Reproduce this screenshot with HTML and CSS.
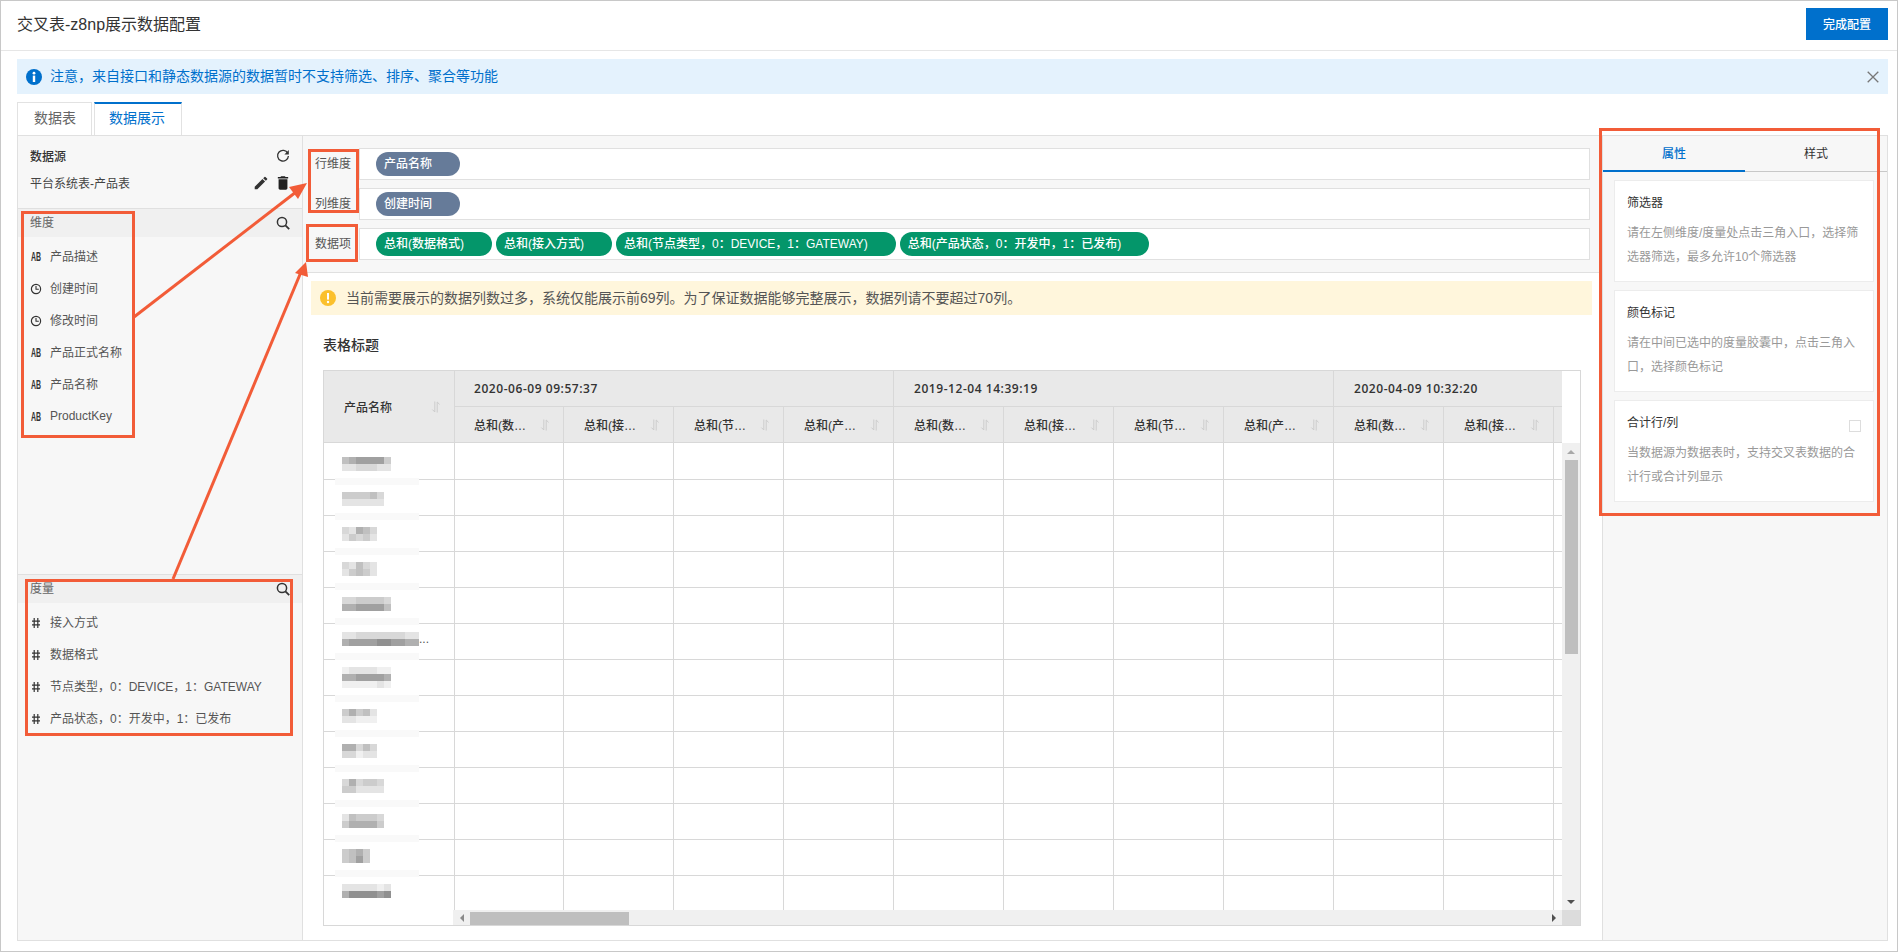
FILE: index.html
```html
<!DOCTYPE html>
<html lang="zh-CN">
<head>
<meta charset="utf-8">
<title>交叉表-z8np展示数据配置</title>
<link rel="stylesheet" href="styles.css">
</head>
<body>
<svg class="defs" aria-hidden="true">
  <symbol id="i-sort" viewBox="0 0 10 14"><path d="M3.8 1.5v10.5L1.4 9.6M6.2 12.5V2l2.4 2.4" fill="none" stroke="currentColor" stroke-width="1"/></symbol>
  <symbol id="i-ab-clock" viewBox="0 0 12 12"><circle cx="6" cy="6" r="4.6" fill="none" stroke="currentColor" stroke-width="1.2"/><path d="M6 3v3.2h2.8" fill="none" stroke="currentColor" stroke-width="1.1"/></symbol>
  <symbol id="i-hash" viewBox="0 0 12 12"><path d="M4.2 1v10M7.8 1v10M2 4.2h8M2 7.8h8" fill="none" stroke="currentColor" stroke-width="1.2"/></symbol>
  <symbol id="i-search" viewBox="0 0 14 14"><circle cx="6" cy="6" r="4.6" fill="none" stroke="currentColor" stroke-width="1.5"/><path d="M9.4 9.4l3.8 3.8" fill="none" stroke="currentColor" stroke-width="1.8"/></symbol>
</svg>
<div class="frame">
  <header class="topbar">
    <h1 class="page-title">交叉表-z8np展示数据配置</h1>
    <button class="done-btn">完成配置</button>
  </header>

  <div class="notice">
    <svg class="notice-icon" viewBox="0 0 16 16"><circle cx="8" cy="8" r="8" fill="#0070cc"/><rect x="6.8" y="6.6" width="2.4" height="6.4" fill="#fff"/><circle cx="8" cy="4.2" r="1.4" fill="#fff"/></svg>
    <span class="notice-text">注意，来自接口和静态数据源的数据暂时不支持筛选、排序、聚合等功能</span>
    <svg class="notice-close" viewBox="0 0 12 12"><path d="M.7.7l10.6 10.6M11.3.7L.7 11.3" fill="none" stroke="#777" stroke-width="1.3"/></svg>
  </div>

  <nav class="tabs">
    <a class="tab">数据表</a>
    <a class="tab tab-active">数据展示</a>
  </nav>

  <main class="workspace">
    <aside class="fields">
      <section class="source">
        <div class="source-row">
          <strong class="source-title">数据源</strong>
          <svg class="tool" viewBox="0 0 14 14"><path d="M11.8 4.2A5.4 5.4 0 1 0 12.4 7" fill="none" stroke="#333" stroke-width="1.3"/><path d="M12.8 1v4.4H8.4z" fill="#333"/></svg>
        </div>
        <div class="source-row source-row-name">
          <span class="source-name">平台系统表-产品表</span>
          <span class="tools">
            <svg class="tool" viewBox="2 2 20 20"><path fill="#333" d="M3 17.25V21h3.75L17.81 9.94l-3.75-3.75L3 17.25zM20.71 7.04a1 1 0 0 0 0-1.41l-2.34-2.34a1 1 0 0 0-1.41 0l-1.83 1.83 3.75 3.75 1.83-1.83z"/></svg>
            <svg class="tool" viewBox="4 2.5 16 19"><path fill="#222" d="M6 19c0 1.1.9 2 2 2h8c1.1 0 2-.9 2-2V7H6v12zM19 4h-3.5l-1-1h-5l-1 1H5v2h14V4z"/></svg>
          </span>
        </div>
      </section>

      <section class="field-group field-group-dim">
        <div class="group-head"><span class="group-name">维度</span><svg class="tool"><use href="#i-search"/></svg></div>
        <ul class="field-list">
          <li><span class="ab">AB</span><span class="field-name">产品描述</span></li>
          <li><svg class="field-icon"><use href="#i-ab-clock"/></svg><span class="field-name">创建时间</span></li>
          <li><svg class="field-icon"><use href="#i-ab-clock"/></svg><span class="field-name">修改时间</span></li>
          <li><span class="ab">AB</span><span class="field-name">产品正式名称</span></li>
          <li><span class="ab">AB</span><span class="field-name">产品名称</span></li>
          <li><span class="ab">AB</span><span class="field-name">ProductKey</span></li>
        </ul>
      </section>

      <section class="field-group">
        <div class="group-head"><span class="group-name">度量</span><svg class="tool"><use href="#i-search"/></svg></div>
        <ul class="field-list">
          <li><svg class="field-icon"><use href="#i-hash"/></svg><span class="field-name">接入方式</span></li>
          <li><svg class="field-icon"><use href="#i-hash"/></svg><span class="field-name">数据格式</span></li>
          <li><svg class="field-icon"><use href="#i-hash"/></svg><span class="field-name">节点类型，0：DEVICE，1：GATEWAY</span></li>
          <li><svg class="field-icon"><use href="#i-hash"/></svg><span class="field-name">产品状态，0：开发中，1：已发布</span></li>
        </ul>
      </section>
    </aside>

    <section class="canvas">
      <div class="config">
        <div class="config-row"><span class="config-label">行维度</span><div class="config-box"><span class="pill pill-dim">产品名称</span></div></div>
        <div class="config-row"><span class="config-label">列维度</span><div class="config-box"><span class="pill pill-dim">创建时间</span></div></div>
        <div class="config-row"><span class="config-label">数据项</span><div class="config-box">
          <span class="pill pill-num">总和(数据格式)</span>
          <span class="pill pill-num">总和(接入方式)</span>
          <span class="pill pill-num">总和(节点类型，0：DEVICE，1：GATEWAY)</span>
          <span class="pill pill-num">总和(产品状态，0：开发中，1：已发布)</span>
        </div></div>
      </div>

      <div class="warning">
        <svg class="warning-icon" viewBox="0 0 16 16"><circle cx="8" cy="8" r="8" fill="#fbc02d"/><rect x="7" y="3" width="2" height="6.6" fill="#fff"/><circle cx="8" cy="12" r="1.2" fill="#fff"/></svg>
        <span class="warning-text">当前需要展示的数据列数过多，系统仅能展示前69列。为了保证数据能够完整展示，数据列请不要超过70列。</span>
      </div>

      <h2 class="table-title">表格标题</h2>

      <div class="table">
        <div class="cross">
          <div class="thead">
            <div class="th th-corner"><span>产品名称</span><svg class="sort"><use href="#i-sort"/></svg></div>
            <div class="th th-group th-lead">2020-06-09 09:57:37</div>
            <div class="th th-group">2019-12-04 14:39:19</div>
            <div class="th th-group th-group-3">2020-04-09 10:32:20</div>
            <div class="th th-lead"><span>总和(数…</span><svg class="sort"><use href="#i-sort"/></svg></div>
            <div class="th"><span>总和(接…</span><svg class="sort"><use href="#i-sort"/></svg></div>
            <div class="th"><span>总和(节…</span><svg class="sort"><use href="#i-sort"/></svg></div>
            <div class="th"><span>总和(产…</span><svg class="sort"><use href="#i-sort"/></svg></div>
            <div class="th"><span>总和(数…</span><svg class="sort"><use href="#i-sort"/></svg></div>
            <div class="th"><span>总和(接…</span><svg class="sort"><use href="#i-sort"/></svg></div>
            <div class="th"><span>总和(节…</span><svg class="sort"><use href="#i-sort"/></svg></div>
            <div class="th"><span>总和(产…</span><svg class="sort"><use href="#i-sort"/></svg></div>
            <div class="th"><span>总和(数…</span><svg class="sort"><use href="#i-sort"/></svg></div>
            <div class="th"><span>总和(接…</span><svg class="sort"><use href="#i-sort"/></svg></div>
            <div class="th"></div>
          </div>
          <div class="tbody">
            <div class="tr"><i></i><i></i><i></i><i></i><i></i><i></i><i></i><i></i><i></i><i></i><i></i><i></i></div>
            <div class="tr"><i></i><i></i><i></i><i></i><i></i><i></i><i></i><i></i><i></i><i></i><i></i><i></i></div>
            <div class="tr"><i></i><i></i><i></i><i></i><i></i><i></i><i></i><i></i><i></i><i></i><i></i><i></i></div>
            <div class="tr"><i></i><i></i><i></i><i></i><i></i><i></i><i></i><i></i><i></i><i></i><i></i><i></i></div>
            <div class="tr"><i></i><i></i><i></i><i></i><i></i><i></i><i></i><i></i><i></i><i></i><i></i><i></i></div>
            <div class="tr"><i></i><i></i><i></i><i></i><i></i><i></i><i></i><i></i><i></i><i></i><i></i><i></i></div>
            <div class="tr"><i></i><i></i><i></i><i></i><i></i><i></i><i></i><i></i><i></i><i></i><i></i><i></i></div>
            <div class="tr"><i></i><i></i><i></i><i></i><i></i><i></i><i></i><i></i><i></i><i></i><i></i><i></i></div>
            <div class="tr"><i></i><i></i><i></i><i></i><i></i><i></i><i></i><i></i><i></i><i></i><i></i><i></i></div>
            <div class="tr"><i></i><i></i><i></i><i></i><i></i><i></i><i></i><i></i><i></i><i></i><i></i><i></i></div>
            <div class="tr"><i></i><i></i><i></i><i></i><i></i><i></i><i></i><i></i><i></i><i></i><i></i><i></i></div>
            <div class="tr"><i></i><i></i><i></i><i></i><i></i><i></i><i></i><i></i><i></i><i></i><i></i><i></i></div>
            <div class="tr"><i></i><i></i><i></i><i></i><i></i><i></i><i></i><i></i><i></i><i></i><i></i><i></i></div>
          </div>
        </div>
        <div class="vscroll">
          <div class="vs-blank"></div>
          <div class="vs-track">
            <span class="sb-btn"><b class="tri tri-up"></b></span>
            <span class="vs-thumb"></span>
            <span class="sb-btn sb-btn-end"><b class="tri tri-down"></b></span>
          </div>
        </div>
        <div class="hscroll">
          <span class="sb-btn"><b class="tri tri-left"></b></span>
          <span class="hs-thumb"></span>
          <span class="sb-btn sb-btn-end"><b class="tri tri-right"></b></span>
        </div>
        <div class="sb-corner"></div>

        <div class="redactions" aria-hidden="true">
          <div class="mosaic m7"><i class="s4"></i><i class="s3"></i><i class="s2"></i><i class="s2"></i><i class="s2"></i><i class="s2"></i><i class="s5"></i><i class="s7"></i><i class="s7"></i><i class="s6"></i><i class="s6"></i><i class="s6"></i><i class="s7"></i><i class="s7"></i></div>
          <div class="band"></div>
          <div class="mosaic m6"><i class="s5"></i><i class="s5"></i><i class="s5"></i><i class="s5"></i><i class="s4"></i><i class="s6"></i><i class="s7"></i><i class="s7"></i><i class="s7"></i><i class="s7"></i><i class="s7"></i><i class="s7"></i></div>
          <div class="band"></div>
          <div class="mosaic m5"><i class="s6"></i><i class="s7"></i><i class="s3"></i><i class="s4"></i><i class="s6"></i><i class="s7"></i><i class="s5"></i><i class="s6"></i><i class="s5"></i><i class="s7"></i></div>
          <div class="band"></div>
          <div class="mosaic m5"><i class="s6"></i><i class="s7"></i><i class="s4"></i><i class="s6"></i><i class="s7"></i><i class="s7"></i><i class="s5"></i><i class="s4"></i><i class="s5"></i><i class="s7"></i></div>
          <div class="band"></div>
          <div class="mosaic m7"><i class="s6"></i><i class="s6"></i><i class="s5"></i><i class="s5"></i><i class="s5"></i><i class="s5"></i><i class="s6"></i><i class="s3"></i><i class="s3"></i><i class="s2"></i><i class="s2"></i><i class="s2"></i><i class="s2"></i><i class="s4"></i></div>
          <div class="band"></div>
          <div class="mosaic-line"><div class="mosaic m11"><i class="s7"></i><i class="s7"></i><i class="s6"></i><i class="s6"></i><i class="s6"></i><i class="s6"></i><i class="s6"></i><i class="s6"></i><i class="s6"></i><i class="s7"></i><i class="s7"></i><i class="s3"></i><i class="s2"></i><i class="s2"></i><i class="s2"></i><i class="s2"></i><i class="s1"></i><i class="s1"></i><i class="s2"></i><i class="s2"></i><i class="s3"></i><i class="s3"></i></div><span class="mosaic-more">...</span></div>
          <div class="band"></div>
          <div class="mosaic m7"><i class="s8"></i><i class="s7"></i><i class="s7"></i><i class="s7"></i><i class="s7"></i><i class="s8"></i><i class="s8"></i><i class="s3"></i><i class="s3"></i><i class="s2"></i><i class="s2"></i><i class="s2"></i><i class="s2"></i><i class="s3"></i><i class="s8"></i><i class="s8"></i><i class="s8"></i><i class="s8"></i><i class="s8"></i><i class="s7"></i><i class="s8"></i></div>
          <div class="band"></div>
          <div class="mosaic m5"><i class="s5"></i><i class="s3"></i><i class="s5"></i><i class="s4"></i><i class="s7"></i><i class="s7"></i><i class="s7"></i><i class="s8"></i><i class="s8"></i><i class="s8"></i></div>
          <div class="band"></div>
          <div class="mosaic m5"><i class="s3"></i><i class="s3"></i><i class="s6"></i><i class="s4"></i><i class="s6"></i><i class="s6"></i><i class="s6"></i><i class="s8"></i><i class="s7"></i><i class="s7"></i></div>
          <div class="band"></div>
          <div class="mosaic m6"><i class="s6"></i><i class="s3"></i><i class="s6"></i><i class="s5"></i><i class="s5"></i><i class="s6"></i><i class="s5"></i><i class="s5"></i><i class="s7"></i><i class="s7"></i><i class="s7"></i><i class="s7"></i></div>
          <div class="band"></div>
          <div class="mosaic m6"><i class="s7"></i><i class="s4"></i><i class="s5"></i><i class="s5"></i><i class="s5"></i><i class="s6"></i><i class="s5"></i><i class="s3"></i><i class="s3"></i><i class="s3"></i><i class="s3"></i><i class="s5"></i></div>
          <div class="band"></div>
          <div class="mosaic m4"><i class="s5"></i><i class="s4"></i><i class="s3"></i><i class="s5"></i><i class="s5"></i><i class="s4"></i><i class="s2"></i><i class="s5"></i></div>
          <div class="band"></div>
          <div class="mosaic m7"><i class="s7"></i><i class="s7"></i><i class="s7"></i><i class="s7"></i><i class="s7"></i><i class="s8"></i><i class="s7"></i><i class="s3"></i><i class="s1"></i><i class="s1"></i><i class="s1"></i><i class="s1"></i><i class="s2"></i><i class="s1"></i></div>
        </div>
      </div>
    </section>

    <aside class="props">
      <div class="props-tabs">
        <a class="props-tab props-tab-active">属性</a>
        <a class="props-tab">样式</a>
      </div>
      <div class="card">
        <h3 class="card-title">筛选器</h3>
        <p class="card-text">请在左侧维度/度量处点击三角入口，选择筛选器筛选，最多允许10个筛选器</p>
      </div>
      <div class="card">
        <h3 class="card-title">颜色标记</h3>
        <p class="card-text">请在中间已选中的度量胶囊中，点击三角入口，选择颜色标记</p>
      </div>
      <div class="card">
        <div class="card-head"><h3 class="card-title">合计行/列</h3><span class="checkbox"></span></div>
        <p class="card-text">当数据源为数据表时，支持交叉表数据的合计行或合计列显示</p>
      </div>
    </aside>
  </main>
</div>

<svg class="annotations" viewBox="0 0 1898 952" aria-hidden="true">
  <g class="anno-box">
    <rect x="22.5" y="212.5" width="111" height="224"/>
    <rect x="26.5" y="580.5" width="265" height="154"/>
    <rect x="309.5" y="150.5" width="48" height="61"/>
    <rect x="307.5" y="225.5" width="49" height="35"/>
    <rect x="1600.5" y="129.5" width="278" height="385"/>
  </g>
  <g class="anno-arrow">
    <line x1="134" y1="317" x2="296" y2="192"/>
    <line x1="173" y1="579" x2="301" y2="272"/>
  </g>
  <polygon class="anno-head" points="307,183 289,187 298,199"/>
  <polygon class="anno-head" points="306,262 295,273 308,277"/>
</svg>
</body>
</html>
```
FILE: styles.css
```css
* { box-sizing: border-box; }
html, body { margin: 0; height: 952px; overflow: hidden; }
body {
  position: relative;
  font-family: "Liberation Sans", "Noto Sans CJK SC", sans-serif;
  font-size: 12px;
  color: #333;
  background: #fff;
}
h1, h2, h3, p, ul { margin: 0; padding: 0; }
ul { list-style: none; }
.defs { display: none; }

.frame {
  height: 952px;
  border: 1px solid #c8c8c8;
  padding: 0 9px 0 16px;
  display: flex;
  flex-direction: column;
}

.topbar {
  height: 50px;
  margin: 0 -9px 0 -16px;
  padding: 0 9px 3px 16px;
  border-bottom: 1px solid #e6e6e6;
  display: flex;
  align-items: center;
  justify-content: space-between;
  flex: none;
}
.page-title { font-size: 16px; font-weight: 400; color: #333; margin-bottom: 3px; }
.done-btn {
  width: 82px;
  height: 32px;
  padding: 0 0 2px;
  border: 0;
  background: #0070cc;
  color: #fff;
  font: 500 12px "Liberation Sans", "Noto Sans CJK SC", sans-serif;
}

.notice {
  flex: none;
  height: 35px;
  margin-top: 8px;
  padding: 0 9px 0 9px;
  background: #e4f2fd;
  color: #0070cc;
  font-size: 14px;
  display: flex;
  align-items: center;
}
.notice-text { margin-bottom: 4px; }
.notice-icon { width: 16px; height: 16px; margin-right: 8px; flex: none; }
.notice-close { width: 12px; height: 12px; margin-left: auto; flex: none; }

.tabs { flex: none; display: flex; gap: 2px; height: 33px; margin-top: 8px; }
.tab {
  padding: 0 15px 0 16px;
  border: 1px solid #e2e2e2;
  border-bottom: 0;
  font-size: 14px;
  line-height: 30px;
  color: #666;
}
.tab-active {
  padding: 0 16px 0 14px;
  border-top: 2px solid #0070cc;
  line-height: 29px;
  color: #0070cc;
}

.workspace {
  flex: none;
  height: 806px;
  border: 1px solid #e0e0e0;
  display: flex;
}

.fields {
  flex: none;
  width: 285px;
  background: #f7f7f7;
  border-right: 1px solid #e0e0e0;
}
.source { height: 73px; padding: 10px 12px 0; border-bottom: 1px solid #e0e0e0; }
.source-row { height: 20px; display: flex; align-items: center; justify-content: space-between; }
.source-row-name { margin-top: 7px; }
.source-title { font-weight: 500; margin-bottom: 2px; }
.source-name { color: #444; margin-bottom: 2px; }
.tools { display: flex; gap: 8px; }
.tool { width: 14px; height: 14px; flex: none; color: #333; }
.field-group-dim { height: 366px; border-bottom: 1px solid #e0e0e0; }
.group-head {
  height: 28px;
  padding: 0 12px;
  background: #f0f0f0;
  color: #666;
  display: flex;
  align-items: center;
  justify-content: space-between;
}
.group-name { margin-bottom: 3px; }
.field-list { padding: 4px 0 0 12px; color: #555; }
.field-list li { height: 32px; display: flex; align-items: center; }
.field-name { margin-bottom: 3px; }
.field-icon { width: 12px; height: 12px; margin-right: 8px; flex: none; color: #333; }
.ab {
  width: 12px;
  margin-right: 8px;
  display: flex;
  justify-content: center;
  font-size: 12px;
  line-height: 12px;
  font-weight: 700;
  color: #333;
  transform: scaleX(.58);
  flex: none;
}

.canvas { flex: 1; min-width: 0; display: flex; flex-direction: column; }
.config {
  height: 137px;
  padding: 12px 12px 0 0;
  background: #f7f7f7;
  border-bottom: 1px solid #e0e0e0;
  display: flex;
  flex-direction: column;
  gap: 8px;
}
.config-row { display: flex; height: 32px; }
.config-label { width: 56px; flex: none; padding-left: 12px; line-height: 33px; color: #555; }
.config-box {
  flex: 1;
  padding: 3px 16px;
  background: #fff;
  border: 1px solid #e0e0e0;
  display: flex;
  gap: 4px;
}
.pill {
  height: 24px;
  padding: 0 28px 0 8px;
  border-radius: 12px;
  color: #fff;
  line-height: 24px;
  font-weight: 500;
  white-space: nowrap;
}
.pill-dim { background: #667b99; }
.pill-num { background: #04966a; }

.warning {
  flex: none;
  height: 34px;
  margin: 8px 10px 0 8px;
  padding-left: 9px;
  background: #fff6dc;
  color: #555;
  font-size: 14px;
  display: flex;
  align-items: center;
}
.warning-text { margin-bottom: 2px; }
.warning-icon { width: 16px; height: 16px; margin-right: 10px; flex: none; }

.table-title {
  flex: none;
  margin: 20px 0 0 20px;
  font-size: 14px;
  line-height: 20px;
  font-weight: 500;
  color: #333;
}

.table {
  position: relative;
  flex: none;
  height: 556px;
  margin: 15px 21px 0 20px;
  border: 1px solid #d8d8d8;
  display: grid;
  grid-template-columns: 1fr 18px;
  grid-template-rows: 1fr 15px;
  overflow: hidden;
}
.cross { overflow: hidden; min-width: 0; min-height: 0; }
.thead, .tr {
  display: grid;
  grid-template-columns: 131px 109px repeat(10, 110px);
}
.thead { grid-template-rows: 36px 36px; background: #e9e9e9; }
.th {
  padding: 0 13px 0 20px;
  border-right: 1px solid #d8d8d8;
  border-bottom: 1px solid #d8d8d8;
  display: flex;
  align-items: center;
  justify-content: space-between;
  font-weight: 500;
  color: #333;
  min-width: 0;
  white-space: nowrap;
}
.th-corner { grid-row: span 2; }
.th-lead { padding-left: 19px; }
.th-group {
  grid-column: span 4;
  font-family: "Open Sans", sans-serif;
  font-weight: 600;
  letter-spacing: .55px;
}
.th-group-3 { grid-column: span 3; }
.sort { width: 10px; height: 14px; flex: none; color: #ccc; }
.tr { height: 36px; }
.tr:first-child { height: 37px; }
.tr i { border-right: 1px solid #d8d8d8; border-bottom: 1px solid #d8d8d8; }

.vscroll { display: flex; flex-direction: column; min-height: 0; }
.vs-blank { height: 72px; flex: none; background: #fff; }
.vs-track { flex: 1; background: #f0f0f0; display: flex; flex-direction: column; align-items: center; }
.vs-thumb { width: 13px; height: 194px; background: #bfbfbf; flex: none; }
.hscroll { margin-left: 129px; background: #f0f0f0; display: flex; align-items: flex-end; }
.hs-thumb { width: 159px; height: 13px; background: #bfbfbf; flex: none; }
.sb-btn { width: 17px; height: 17px; flex: none; display: flex; align-items: center; justify-content: center; }
.vs-track .sb-btn-end { margin-top: auto; }
.hscroll .sb-btn { height: 15px; }
.hscroll .sb-btn-end { margin-left: auto; }
.sb-corner { background: #dcdcdc; }
.tri { width: 0; height: 0; border-style: solid; border-color: transparent; }
.tri-up { border-width: 0 4px 4px; border-bottom-color: #a8a8a8; }
.tri-down { border-width: 4px 4px 0; border-top-color: #505050; }
.tri-left { border-width: 4px 4px 4px 0; border-right-color: #8a8a8a; }
.tri-right { border-width: 4px 0 4px 4px; border-left-color: #505050; }

.redactions {
  position: absolute;
  left: 11px;
  top: 86px;
  width: 110px;
  display: flex;
  flex-direction: column;
  align-items: flex-start;
}
.band { width: 84px; height: 7px; margin: 7px 0; background: #f9f9f9; }
.mosaic { margin-left: 7px; display: grid; grid-auto-rows: 7px; }
.mosaic i { display: block; }
.m4 { grid-template-columns: repeat(4, 7px); }
.m5 { grid-template-columns: repeat(5, 7px); }
.m6 { grid-template-columns: repeat(6, 7px); }
.m7 { grid-template-columns: repeat(7, 7px); }
.m11 { grid-template-columns: repeat(11, 7px); }
.mosaic-line { display: flex; align-items: flex-end; }
.mosaic-more { height: 14px; line-height: 14px; color: #555; }
.s1 { background: #909090; }
.s2 { background: #a0a0a0; }
.s3 { background: #b0b0b0; }
.s4 { background: #c0c0c0; }
.s5 { background: #cccccc; }
.s6 { background: #d8d8d8; }
.s7 { background: #e4e4e4; }
.s8 { background: #f0f0f0; }

.props {
  flex: none;
  width: 285px;
  background: #f7f7f7;
  border-left: 1px solid #e0e0e0;
}
.props-tabs { height: 36px; display: flex; border-bottom: 1px solid #c8c8c8; }
.props-tab { flex: 1; text-align: center; line-height: 36px; color: #333; }
.props-tab-active { color: #0070cc; font-weight: 500; border-bottom: 2px solid #0070cc; height: 36px; }
.card {
  height: 102px;
  margin: 8px 13px 0 11px;
  padding: 12px 12px 0;
  background: #fff;
  border: 1px solid #ececec;
}
.card-title { font-size: 12px; line-height: 20px; font-weight: 400; color: #333; }
.card-head { display: flex; justify-content: space-between; align-items: flex-start; }
.checkbox { width: 12px; height: 12px; margin: 7px 0 0 0; border: 1px solid #ddd; background: #fff; }
.card-text { margin-top: 8px; line-height: 24px; color: #999; }

.annotations {
  position: absolute;
  left: 0;
  top: 0;
  width: 1898px;
  height: 952px;
  pointer-events: none;
}
.anno-box rect { fill: none; stroke: #f25c38; stroke-width: 3; }
.anno-arrow line { stroke: #f25c38; stroke-width: 3; }
.anno-head { fill: #f25c38; }
```
